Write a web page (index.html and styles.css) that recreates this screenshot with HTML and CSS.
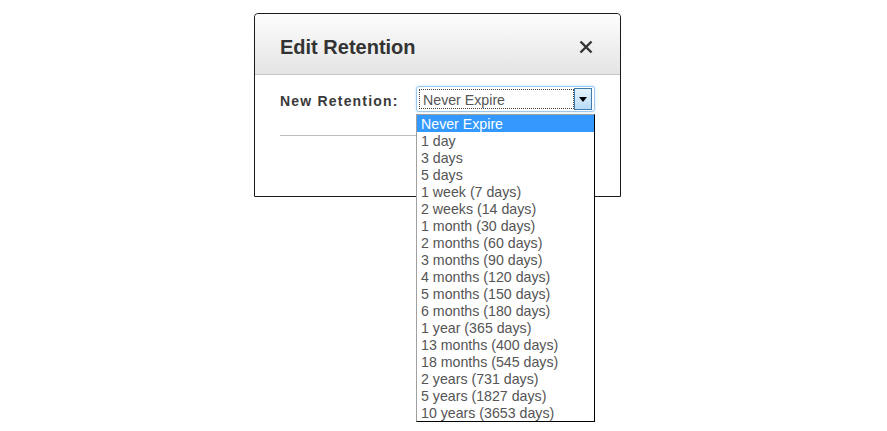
FILE: index.html
```html
<!DOCTYPE html>
<html>
<head>
<meta charset="utf-8">
<link rel="stylesheet" href="styles.css">
</head>
<body>
<div class="dialog">
  <div class="dialog-header">
    <h1 class="title">Edit Retention</h1>
    <span class="close" aria-label="Close">
      <svg width="16" height="16" viewBox="0 0 16 16"><path d="M2.5 2.5 L13.5 13.5 M13.5 2.5 L2.5 13.5" stroke="#333" stroke-width="2.4" stroke-linecap="butt" fill="none"/></svg>
    </span>
  </div>
  <div class="dialog-body">
    <div class="field-row">
      <label class="field-label">New Retention:</label>
      <div class="select-wrap">
        <div class="select">
          <span class="select-value">Never Expire</span>
          <span class="select-btn">
            <svg width="8" height="5" viewBox="0 0 8 5"><path d="M0 0 H8 L4 5 Z" fill="#000"/></svg>
          </span>
        </div>
        <ul class="options">
          <li class="selected">Never Expire</li>
          <li>1 day</li>
          <li>3 days</li>
          <li>5 days</li>
          <li>1 week (7 days)</li>
          <li>2 weeks (14 days)</li>
          <li>1 month (30 days)</li>
          <li>2 months (60 days)</li>
          <li>3 months (90 days)</li>
          <li>4 months (120 days)</li>
          <li>5 months (150 days)</li>
          <li>6 months (180 days)</li>
          <li>1 year (365 days)</li>
          <li>13 months (400 days)</li>
          <li>18 months (545 days)</li>
          <li>2 years (731 days)</li>
          <li>5 years (1827 days)</li>
          <li>10 years (3653 days)</li>
        </ul>
      </div>
    </div>
    <div class="divider"></div>
  </div>
</div>
</body>
</html>
```
FILE: styles.css
```css
html, body {
  margin: 0;
  padding: 0;
  background: #fff;
}
html {
  height: 100%;
}
body {
  box-sizing: border-box;
  min-height: 100%;
  font-family: "Liberation Sans", Arial, sans-serif;
  color: #333;
  padding: 13px 0 0 254px;
}
.dialog {
  width: 365px;
  height: 182px;
  border: 1px solid #1a1a1a;
  border-radius: 4px 4px 0 0;
  background: #fff;
}
.dialog-header {
  height: 60px;
  border-bottom: 1px solid #c8c8c8;
  border-radius: 4px 4px 0 0;
  background: linear-gradient(#fdfdfd, #e4e4e4);
  display: flex;
  align-items: center;
  justify-content: space-between;
  padding: 0 26px 0 25px;
}
.title {
  margin: 0;
  font-size: 20px;
  font-weight: bold;
  color: #333;
  padding-top: 7px;
}
.close {
  display: flex;
  width: 16px;
  height: 16px;
  margin-top: 6px;
}
.dialog-body {
  padding: 11px 25px 0 25px;
}
.field-row {
  display: flex;
  align-items: center;
}
.field-label {
  width: 136px;
  font-size: 14px;
  font-weight: bold;
  letter-spacing: 1.2px;
  color: #3a3a3a;
  margin-top: 3px;
}
.select-wrap {
  position: relative;
  width: 179px;
}
.select {
  box-sizing: border-box;
  height: 26px;
  border: 1px solid #9cc8ee;
  border-radius: 3px;
  box-shadow: 0 0 3px #bfe0fb;
  background: #fff;
  display: flex;
  align-items: center;
  padding: 2px;
}
.select-value {
  flex: 1;
  box-sizing: border-box;
  height: 20px;
  line-height: 21px;
  border: 1px dotted #444;
  font-size: 14.2px;
  color: #555;
  padding-left: 3px;
}
.select-btn {
  box-sizing: border-box;
  width: 18px;
  height: 22px;
  border: 1px solid #3d7bad;
  background: linear-gradient(#e5f3fd, #b8dcf7);
  display: flex;
  align-items: center;
  justify-content: center;
}
.options {
  position: absolute;
  left: 0;
  top: 28px;
  margin: 0;
  padding: 0;
  list-style: none;
  width: 179px;
  box-sizing: border-box;
  background: #fff;
  border-left: 1px solid #a0a0a0;
  border-top: 1px solid #a0a0a0;
  border-right: 1px solid #000;
  border-bottom: 1px solid #000;
  font-size: 14.2px;
  color: #555;
  z-index: 5;
}
.options li {
  height: 17px;
  line-height: 18px;
  padding-left: 4px;
  white-space: nowrap;
}
.options li.selected {
  background: #3399ff;
  color: #fff;
}
.divider {
  margin-top: 23px;
  height: 1px;
  background: #bdbdbd;
}
```
